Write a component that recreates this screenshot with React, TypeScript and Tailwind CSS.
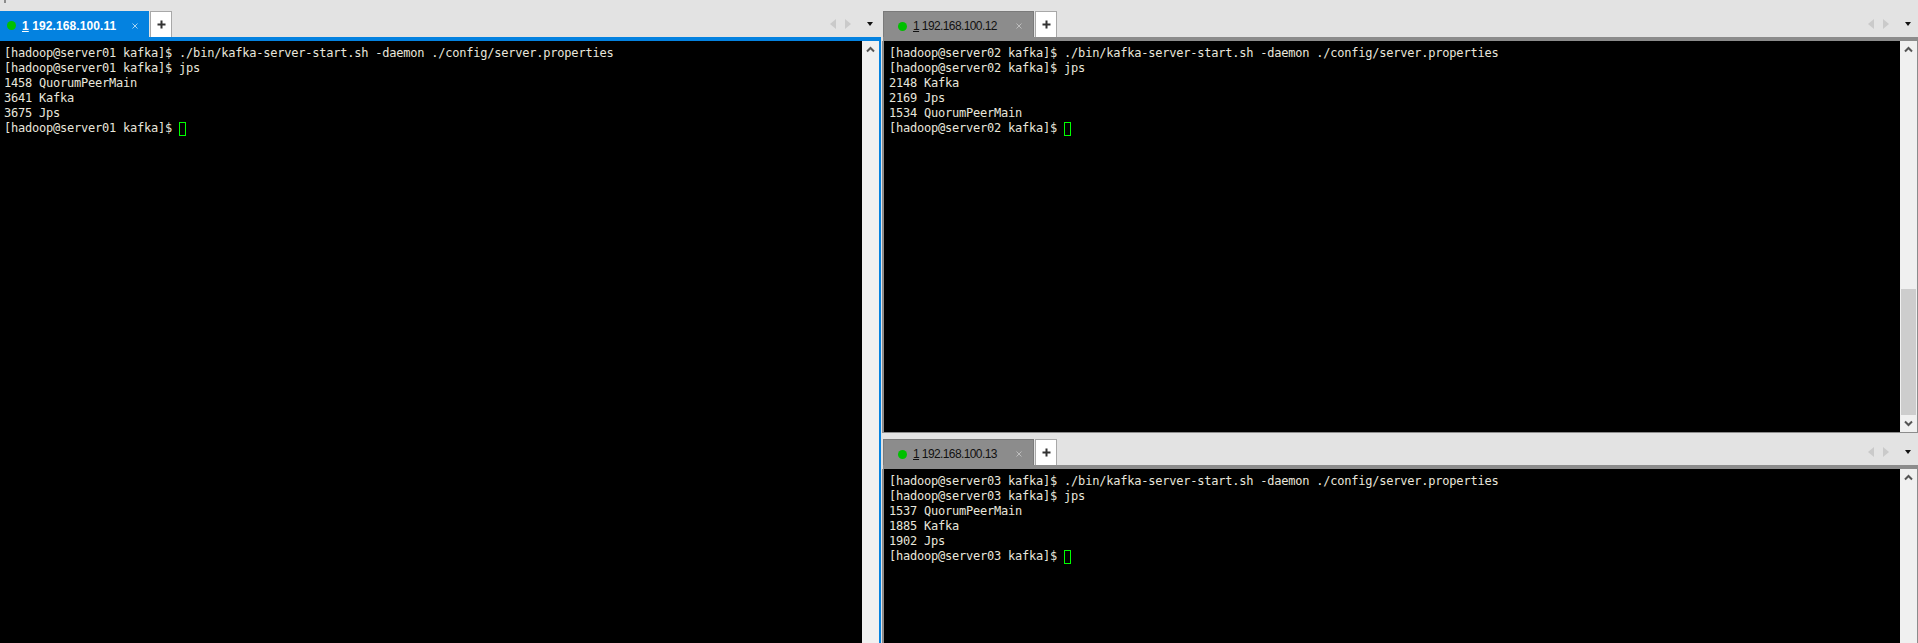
import React from "react";

function Chevron({ dir }: { dir: "up" | "down" }) {
  return (
    <svg width="9" height="7" viewBox="0 0 9 7" className="block">
      <path d={dir === "up" ? "M1 5.5 L4.5 2 L8 5.5" : "M1 1.5 L4.5 5 L8 1.5"} fill="none" stroke="#555" strokeWidth="2" />
    </svg>
  );
}

function TabControls({ wide }: { wide?: boolean }) {
  return (
    <div className={wide ? "ml-auto flex items-center h-[26px] shrink-0 mr-[8px]" : "ml-auto flex items-center h-[26px] shrink-0 mr-[7px]"}>
      <svg width="6" height="10" viewBox="0 0 6 10" className="block"><path d="M6 0 L0 5 L6 10 Z" fill="#cacaca" /></svg>
      <svg width="6" height="10" viewBox="0 0 6 10" className="block ml-[9px]"><path d="M0 0 L6 5 L0 10 Z" fill="#cacaca" /></svg>
      <svg width="6" height="4" viewBox="0 0 6 4" className="block ml-[16px]"><path d="M0 0 L6 0 L3 4 Z" fill="#111" /></svg>
    </div>
  );
}

function Tab({ ip, active }: { ip: string; active?: boolean }) {
  return (
    <div
      className={
        active
          ? "w-[149px] h-[26px] pt-[3px] bg-[#0482e0] text-white flex items-center font-bold shrink-0"
          : "w-[151px] h-[26px] pt-[3px] bg-[#8c8c8c] text-[#111] flex items-center border-t border-l border-r border-[#7a7a7a] shrink-0"
      }
    >
      <span className={active ? "w-[9px] h-[9px] rounded-full bg-[#00c000] ml-[7px]" : "w-[9px] h-[9px] rounded-full bg-[#00c000] ml-[14px]"} />
      <span className={active ? "ml-[6px] text-[12px] tracking-[0.1px]" : "ml-[6px] text-[12px] tracking-[-0.6px]"}>
        <span className="underline">1</span> {ip}
      </span>
      <svg width="6" height="6" viewBox="0 0 6 6" className="block ml-auto mr-[11px]">
        <path d="M0.5 0.5 L5.5 5.5 M5.5 0.5 L0.5 5.5" stroke={active ? "#a8d4f2" : "#bdbdbd"} strokeWidth="1" fill="none" />
      </svg>
    </div>
  );
}

function PlusButton() {
  return (
    <div className="w-[22px] h-[26px] ml-[1px] bg-white border border-[#a8a8a8] border-b-0 flex items-center justify-center shrink-0">
      <svg width="9" height="9" viewBox="0 0 9 9" className="block"><path d="M4.5 0.5 V8.5 M0.5 4.5 H8.5" stroke="#333" strokeWidth="2" fill="none" /></svg>
    </div>
  );
}

function TerminalView({ lines, prompt, narrow }: { lines: string[]; prompt: string; narrow?: boolean }) {
  return (
    <div className={(narrow ? "pl-[4px] " : "pl-[5px] ") + "flex-1 min-w-0 bg-black overflow-hidden pt-[5px] font-['DejaVu_Sans_Mono',monospace] text-[12px] leading-[15px] tracking-[-0.22px] text-[#e8e6dc] whitespace-pre"}>
      {lines.map((l, i) => (
        <div key={i} className="h-[15px]">{l}</div>
      ))}
      <div className="h-[15px] flex items-start">
        <span>{prompt} </span>
        <span className="w-[7px] h-[14px] mt-[1px] border border-[#00ff00]" />
      </div>
    </div>
  );
}

function Scrollbar({ thumb, bottomArrow = true }: { thumb?: boolean; bottomArrow?: boolean }) {
  return (
    <div className="w-[17px] bg-[#f0f0f0] flex flex-col shrink-0">
      <div className="h-[17px] flex items-center justify-center shrink-0"><Chevron dir="up" /></div>
      <div className="flex-1 flex flex-col">
        {thumb ? (
          <>
            <div className="flex-1" />
            <div className="h-[126px] mx-[1px] bg-[#cdcdcd]" />
          </>
        ) : null}
      </div>
      {bottomArrow ? <div className="h-[17px] flex items-center justify-center shrink-0"><Chevron dir="down" /></div> : null}
    </div>
  );
}

const cmd = "./bin/kafka-server-start.sh -daemon ./config/server.properties";

function session(n: string, rows: string[]) {
  const p = `[hadoop@server${n} kafka]$`;
  return { prompt: p, lines: [`${p} ${cmd}`, `${p} jps`, ...rows] };
}

export default function App() {
  const s1 = session("01", ["1458 QuorumPeerMain", "3641 Kafka", "3675 Jps"]);
  const s2 = session("02", ["2148 Kafka", "2169 Jps", "1534 QuorumPeerMain"]);
  const s3 = session("03", ["1537 QuorumPeerMain", "1885 Kafka", "1902 Jps"]);
  return (
    <div className="relative w-[1918px] h-[643px] overflow-hidden bg-[#e3e3e3] flex font-['Liberation_Sans',Arial,sans-serif]">
      <span className="absolute left-[4px] top-0 w-[2px] h-[3px] bg-[#8c8c8c]" />
      <div className="w-[881px] shrink-0 flex flex-col">
        <div className="h-[37px] flex items-end shrink-0">
          <Tab ip="192.168.100.11" active />
          <PlusButton />
          <TabControls wide />
        </div>
        <div className="h-[4px] bg-[#0482e0] shrink-0" />
        <div className="flex-1 min-h-0 flex border-r-2 border-[#0482e0]">
          <TerminalView lines={s1.lines} prompt={s1.prompt} narrow />
          <Scrollbar bottomArrow={false} />
        </div>
      </div>
      <div className="flex-1 min-w-0 flex flex-col ml-[1px]">
        <div className="h-[433px] flex flex-col shrink-0">
          <div className="h-[37px] flex items-end shrink-0 pl-[1px]">
            <Tab ip="192.168.100.12" />
            <PlusButton />
            <TabControls />
          </div>
          <div className="h-[4px] bg-[#8c8c8c] ml-[1px] shrink-0" />
          <div className="flex-1 min-h-0 flex border-l-2 border-r border-[#8c8c8c]">
            <TerminalView lines={s2.lines} prompt={s2.prompt} />
            <Scrollbar thumb />
          </div>
          <div className="h-px bg-[#8c8c8c] shrink-0" />
        </div>
        <div className="flex-1 min-h-0 flex flex-col">
          <div className="h-[32px] flex items-end shrink-0 pl-[1px]">
            <Tab ip="192.168.100.13" />
            <PlusButton />
            <TabControls />
          </div>
          <div className="h-[4px] bg-[#8c8c8c] ml-[1px] shrink-0" />
          <div className="flex-1 min-h-0 flex border-l-2 border-r border-[#8c8c8c]">
            <TerminalView lines={s3.lines} prompt={s3.prompt} />
            <Scrollbar bottomArrow={false} />
          </div>
        </div>
      </div>
    </div>
  );
}
